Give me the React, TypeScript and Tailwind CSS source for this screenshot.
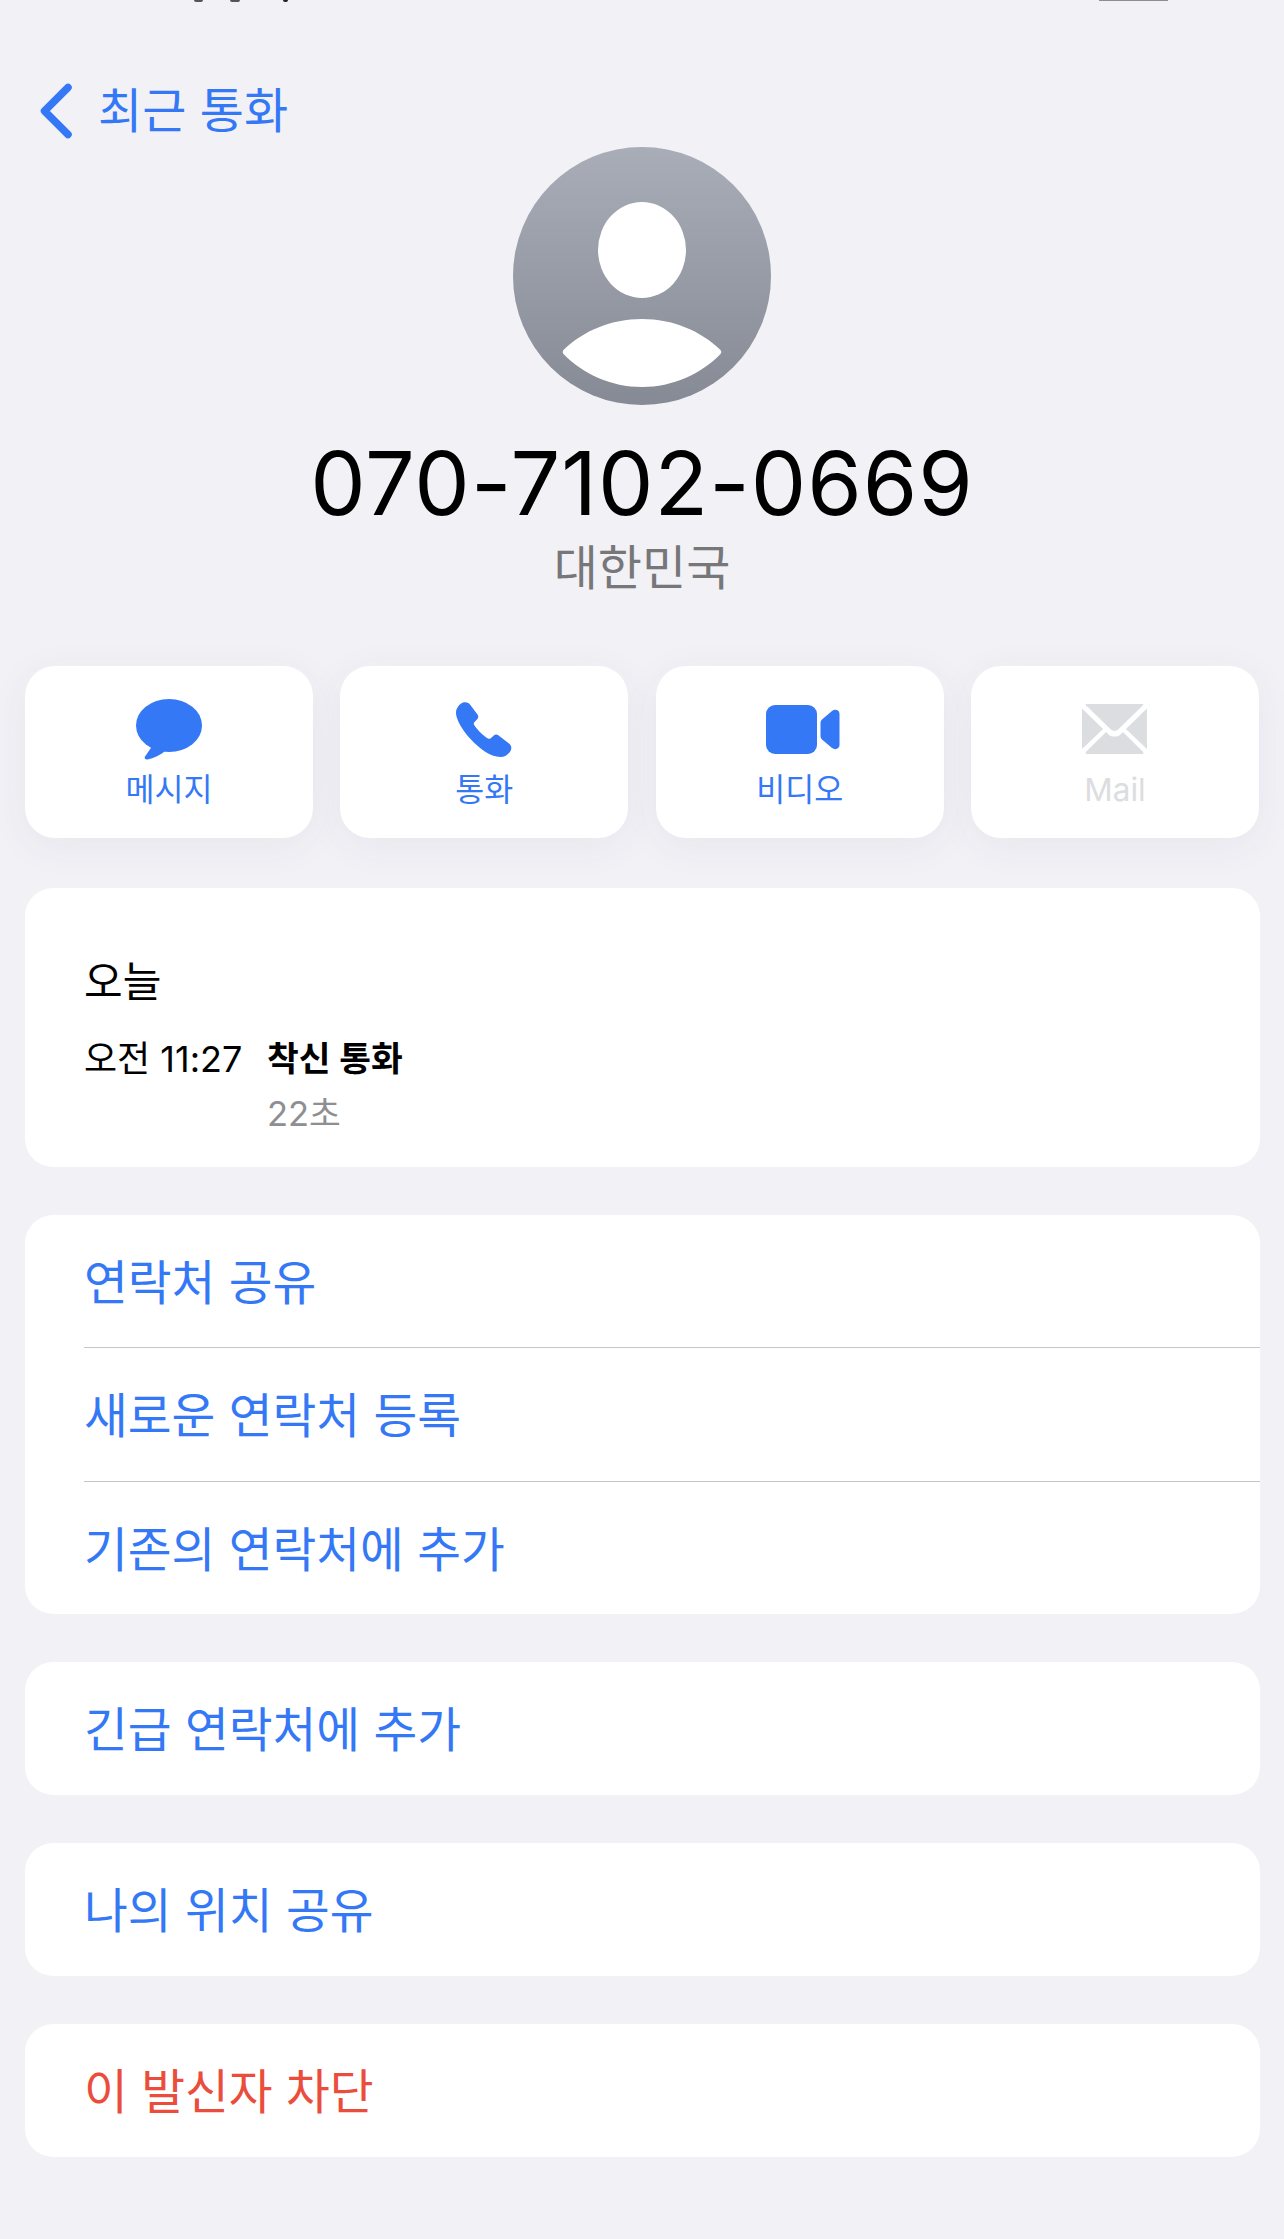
import React from "react"

const font = "font-['Inter','Noto_Sans_CJK_KR',sans-serif]"

const ActionButton = ({
  label,
  icon,
  disabled,
}: {
  label: string
  icon: React.ReactNode
  disabled?: boolean
}) => (
  <div className="flex h-[172px] w-[288px] flex-col items-center rounded-[30px] bg-white shadow-[0_8px_40px_rgba(60,60,90,0.06)]">
    <div className="mt-[32px] flex h-[62px] w-full items-center justify-center">{icon}</div>
    <span
      className={`mt-[9px] text-[31.5px] leading-[42px] ${disabled ? "text-[#dcdde0]" : "text-[#3478f6]"}`}
    >
      {label}
    </span>
  </div>
)

const Row = ({ label, red }: { label: string; red?: boolean }) => (
  <div
    className={`flex h-[132.4px] items-center pt-[3px] text-[47.6px] ${red ? "text-[#eb4d3d]" : "text-[#3478f6]"}`}
  >
    {label}
  </div>
)

const Card = ({ children }: { children: React.ReactNode }) => (
  <div className="rounded-[28px] bg-white pb-[0.6px] pl-[59px]">{children}</div>
)

export default function App() {
  return (
    <div className={`h-[2239px] w-[1284px] overflow-hidden bg-[#f1f1f6] ${font}`}>
      {/* what is left of the status bar, cut off by the crop */}
      <div className="flex h-[2px]">
        <span className="ml-[194px] h-[2px] w-[9px] rounded-b-full bg-[#555]" />
        <span className="ml-[27px] h-[2px] w-[10px] rounded-b-full bg-[#555]" />
        <span className="ml-[43px] h-[2px] w-[5px] rounded-b-full bg-[#222]" />
        <span className="ml-[811px] h-px w-[69px] bg-[#8e8e92]" />
      </div>

      <div className="flex h-[145px] items-end pl-[40px]">
        <svg width="33" height="56" viewBox="0 0 33 56" className="mb-[8px]">
          <path d="M28 4.500 4.500 28 28 51.500" fill="none" stroke="#3478f6" strokeWidth="7.500" strokeLinecap="round" strokeLinejoin="round" />
        </svg>
        <span className="ml-[25px] mb-[-1px] text-[48px] leading-[74px] text-[#3478f6]">최근 통화</span>
      </div>

      <div className="flex flex-col items-center">
        <svg width="258" height="258" viewBox="0 0 258 258">
          <defs>
            <linearGradient id="avatar" x1="0" y1="0" x2="0" y2="1">
              <stop offset="0" stopColor="#a9adb8" />
              <stop offset="1" stopColor="#858a94" />
            </linearGradient>
          </defs>
          <circle cx="129" cy="129" r="129" fill="url(#avatar)" />
          <ellipse cx="129" cy="103" rx="44" ry="48" fill="#fff" />
          <path d="M50.500 203C70 184 98 172 129 172s59 12 78.500 31c1 1 1 3 0 4C188 227 160 240 129 240s-59-13-78.500-33c-1-1-1-3 0-4Z" fill="#fff" />
        </svg>
        <div className="mt-[28px] text-[88px] leading-[100px] tracking-[1px] text-black">070-7102-0669</div>
        <div className="mt-[5px] text-[48px] leading-[60px] text-[#77777a]">대한민국</div>
      </div>

      <div className="mt-[68px] flex justify-between px-[25px]">
        <ActionButton
          label="메시지"
          icon={
            <svg width="66" height="61" viewBox="0 0 66 61">
              <ellipse cx="33" cy="26.500" rx="33" ry="26.500" fill="#3478f6" />
              <path d="M17 46 9 57.500c-1 1.800.5 3.300 2.500 3 6-1 13-4.500 19-9.500Z" fill="#3478f6" />
            </svg>
          }
        />
        <ActionButton
          label="통화"
          icon={
            <svg width="56" height="55" viewBox="0 0 56 55">
              <path d="M8 .3C9.800-.2 12.500.5 14 2.500L21.500 12.500C22.800 14.500 22.500 16 21 17.500L18.500 20C17.500 21 17.500 22 18.500 23.500 21.500 28 27.500 34 32 36.500 33 37 34 37 35 36L37.800 33.500C39.300 32.300 41 32.300 42.600 33.500L53 41.500C55.500 43.500 56 46 54.500 49 52 53 48.500 55 44.500 55 34 55 23 46 15 37.500 6 28 0 17 0 11 0 6 3.500 1.500 8 .3Z" fill="#3478f6" />
            </svg>
          }
        />
        <ActionButton
          label="비디오"
          icon={
            <svg width="74" height="49" viewBox="0 0 74 49" className="ml-[6px]">
              <rect x="0" y="0" width="51" height="49" rx="9" fill="#3478f6" />
              <path d="M56 14.500 66 6C69 3.700 73.500 5 73.500 9V40C73.500 44 69 45.300 66 43L56 34.500C55 33.500 54.500 32.500 54.500 31V18C54.500 16.500 55 15.500 56 14.500Z" fill="#3478f6" />
            </svg>
          }
        />
        <ActionButton
          label="Mail"
          disabled
          icon={
            <svg width="65" height="51" viewBox="0 0 54 52" preserveAspectRatio="none">
              <path d="M4 0h46c1 0 1.300.6.700 1.400L30 26c-1.600 1.800-4.400 1.800-6 0L3.300 1.400C2.700.6 3 0 4 0Z" fill="#dcdde0" />
              <path d="M0 4.500 17.500 25.500 0 46ZM54 4.500 36.500 25.500 54 46Z" fill="#dcdde0" />
              <path d="M20 28.500l2 2.500c2.800 3 7.200 3 10 0l2-2.500L50.800 49c.6.900.2 2-1 2H4.200c-1.200 0-1.600-1.100-1-2Z" fill="#dcdde0" />
            </svg>
          }
        />
      </div>

      <div className="mt-[50px] flex flex-col gap-[48px] pl-[25px] pr-[24px]">
        <div className="h-[279px] rounded-[28px] bg-white pl-[59px] pt-[69px]">
          <div className="text-[42px] leading-[50px] text-black">오늘</div>
          <div className="mt-[29px] flex leading-[46px]">
            <span className="w-[183px] text-[36px] text-black">오전 11:27</span>
            <div className="text-[34.5px]">
              <div className="font-semibold text-black">착신 통화</div>
              <div className="mt-[9px] text-[#8e8e93]">22초</div>
            </div>
          </div>
        </div>

        <div className="rounded-[28px] bg-white pl-[59px]">
          <Row label="연락처 공유" />
          <div className="h-px bg-[#c6c6c8]" />
          <Row label="새로운 연락처 등록" />
          <div className="h-px bg-[#c6c6c8]" />
          <Row label="기존의 연락처에 추가" />
        </div>

        <Card>
          <Row label="긴급 연락처에 추가" />
        </Card>
        <Card>
          <Row label="나의 위치 공유" />
        </Card>
        <Card>
          <Row label="이 발신자 차단" red />
        </Card>
      </div>
    </div>
  )
}
